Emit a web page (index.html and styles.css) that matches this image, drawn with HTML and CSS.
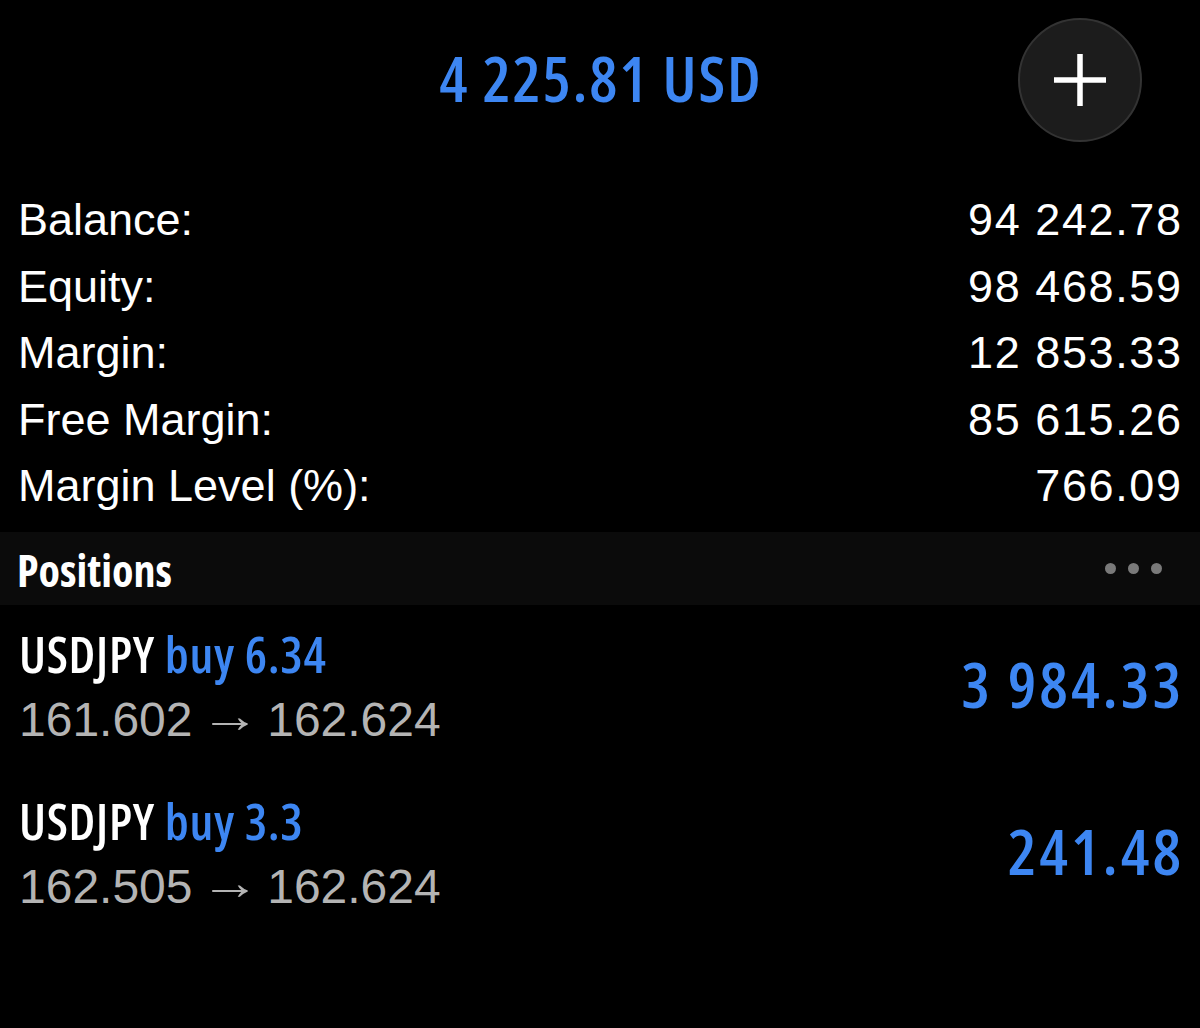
FILE: index.html
```html
<!DOCTYPE html>
<html lang="en">
<head>
<meta charset="utf-8">
<title>Trade</title>
<link rel="stylesheet" href="styles.css">
</head>
<body>
<main class="screen">
  <header class="topbar">
    <div class="topbar-spacer"></div>
    <h1 class="profit-total">4 225.81 USD</h1>
    <button class="add-btn" type="button" aria-label="New order">
      <svg viewBox="0 0 52 52" width="52" height="52" aria-hidden="true">
        <path d="M26 0V52M0 26H52" stroke="#fff" stroke-width="5.5" fill="none"/>
      </svg>
    </button>
  </header>

  <section class="summary">
    <div class="summary-row"><span class="label">Balance:</span><span class="value">94 242.78</span></div>
    <div class="summary-row"><span class="label">Equity:</span><span class="value">98 468.59</span></div>
    <div class="summary-row"><span class="label">Margin:</span><span class="value">12 853.33</span></div>
    <div class="summary-row"><span class="label">Free Margin:</span><span class="value">85 615.26</span></div>
    <div class="summary-row"><span class="label">Margin Level (%):</span><span class="value">766.09</span></div>
  </section>

  <div class="section-head">
    <h2 class="section-title">Positions</h2>
    <div class="more-dots" aria-label="More"><i></i><i></i><i></i></div>
  </div>

  <ul class="positions">
    <li class="position">
      <div class="position-info">
        <div class="position-title"><span class="symbol">USDJPY</span> <span class="side">buy 6.34</span></div>
        <div class="position-prices">161.602 <span class="arrow">→</span> 162.624</div>
      </div>
      <div class="position-profit">3 984.33</div>
    </li>
    <li class="position">
      <div class="position-info">
        <div class="position-title"><span class="symbol">USDJPY</span> <span class="side">buy 3.3</span></div>
        <div class="position-prices">162.505 <span class="arrow">→</span> 162.624</div>
      </div>
      <div class="position-profit">241.48</div>
    </li>
  </ul>
</main>
</body>
</html>
```
FILE: styles.css
```css
* { box-sizing: border-box; }

html, body {
  margin: 0;
  padding: 0;
  background: #000;
}

body {
  color: #fff;
  font-family: "Liberation Sans", Arial, sans-serif;
  width: 1200px;
  height: 1028px;
  overflow: hidden;
}

.screen {
  display: flex;
  flex-direction: column;
}

/* ---- top bar ---- */
.topbar {
  display: grid;
  grid-template-columns: 1fr auto 1fr;
  align-items: center;
  padding: 18px 58px 0 58px;
  height: 142px;
}

.profit-total {
  margin: 0;
  font-family: "Open Sans", sans-serif;
  font-stretch: 75%;
  font-weight: 600;
  font-size: 63px;
  line-height: 1;
  color: #3d86f2;
  letter-spacing: 1.8px;
  margin-right: -1.8px;
  transform: translateY(-3px);
}

.add-btn {
  justify-self: end;
  width: 124px;
  height: 124px;
  border-radius: 50%;
  border: 2px solid #333;
  background: #1c1c1c;
  padding: 0;
  display: flex;
  align-items: center;
  justify-content: center;
  cursor: pointer;
}

.add-btn svg { display: block; }

/* ---- account summary ---- */
.summary {
  margin-top: 45px;
  padding: 0 19px 0 18px;
  display: flex;
  flex-direction: column;
}

.summary-row {
  display: flex;
  justify-content: space-between;
  align-items: center;
  height: 66.5px;
  font-size: 45px;
}

.value {
  letter-spacing: 1.6px;
  margin-right: -1.6px;
}

/* ---- section header ---- */
.section-head {
  margin-top: 12px;
  height: 73px;
  background: #0b0b0b;
  display: flex;
  align-items: center;
  justify-content: space-between;
  padding: 0 38px 0 17px;
}

.section-title {
  margin: 0;
  font-family: "Open Sans", sans-serif;
  font-stretch: 75%;
  font-weight: 700;
  font-size: 44px;
  line-height: 1;
  color: #fff;
  transform: translateY(2px);
}

.more-dots {
  display: flex;
  gap: 12px;
}

.more-dots i {
  width: 11px;
  height: 11px;
  border-radius: 50%;
  background: #7a7a7a;
}

/* ---- positions ---- */
.positions {
  list-style: none;
  margin: 0;
  padding: 0;
}

.position {
  display: flex;
  align-items: center;
  justify-content: space-between;
  height: 167px;
  padding: 16px 19px 19px 19px;
}

.position-info {
  display: flex;
  flex-direction: column;
}

.position-title {
  line-height: 66px;
  height: 66px;
  font-family: "Open Sans", sans-serif;
  font-stretch: 75%;
  font-weight: 600;
  font-size: 50px;
  letter-spacing: 0.7px;
  white-space: nowrap;
}

.symbol { color: #fff; }
.side { color: #3d86f2; }

.position-prices {
  line-height: 66px;
  height: 66px;
  font-size: 48px;
  color: #b4b4b4;
  white-space: nowrap;
}

.arrow {
  display: inline-block;
  transform: translateY(-4px) scaleX(1.25);
}

.position-profit {
  font-family: "Open Sans", sans-serif;
  font-stretch: 75%;
  font-weight: 600;
  font-size: 64px;
  color: #3d86f2;
  letter-spacing: 3px;
  margin-right: -3px;
  margin-top: -6px;
}
```
